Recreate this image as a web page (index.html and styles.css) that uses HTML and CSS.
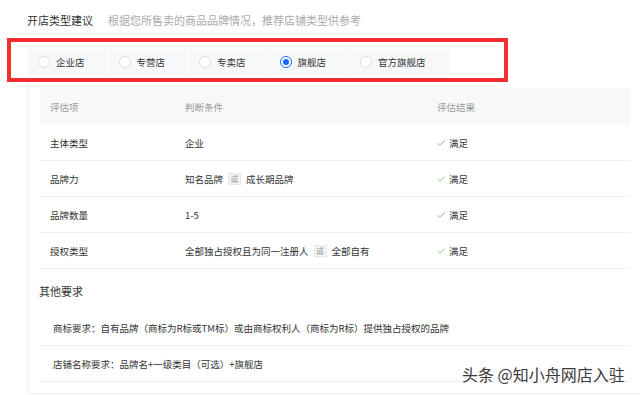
FILE: index.html
```html
<!DOCTYPE html>
<html lang="zh">
<head>
<meta charset="utf-8">
<link rel="stylesheet" href="styles.css">
</head>
<body>
<div class="page">
  <div class="head">
    <span class="title">开店类型建议</span>
    <span class="sub">根据您所售卖的商品品牌情况，推荐店铺类型供参考</span>
  </div>
  <div class="radios">
    <div class="seg"><span class="dot"></span><span>企业店</span></div>
    <div class="seg"><span class="dot"></span><span>专营店</span></div>
    <div class="seg"><span class="dot"></span><span>专卖店</span></div>
    <div class="seg on"><span class="dot"></span><span>旗舰店</span></div>
    <div class="seg"><span class="dot"></span><span>官方旗舰店</span></div>
  </div>
  <div class="card">
    <div class="table">
      <div class="row thead">
        <div class="c1">评估项</div><div class="c2">判断条件</div><div class="c3">评估结果</div>
      </div>
      <div class="row">
        <div class="c1">主体类型</div><div class="c2">企业</div>
        <div class="c3"><svg class="tick" viewBox="0 0 8 6"><path d="M0.6 3.2 L2.9 5.2 L7.4 0.7" fill="none" stroke="#6cc46c" stroke-width="0.9"/></svg>满足</div>
      </div>
      <div class="row">
        <div class="c1">品牌力</div><div class="c2">知名品牌<span class="or">或</span>成长期品牌</div>
        <div class="c3"><svg class="tick" viewBox="0 0 8 6"><path d="M0.6 3.2 L2.9 5.2 L7.4 0.7" fill="none" stroke="#6cc46c" stroke-width="0.9"/></svg>满足</div>
      </div>
      <div class="row">
        <div class="c1">品牌数量</div><div class="c2">1-5</div>
        <div class="c3"><svg class="tick" viewBox="0 0 8 6"><path d="M0.6 3.2 L2.9 5.2 L7.4 0.7" fill="none" stroke="#6cc46c" stroke-width="0.9"/></svg>满足</div>
      </div>
      <div class="row">
        <div class="c1">授权类型</div><div class="c2">全部独占授权且为同一注册人<span class="or">或</span>全部自有</div>
        <div class="c3"><svg class="tick" viewBox="0 0 8 6"><path d="M0.6 3.2 L2.9 5.2 L7.4 0.7" fill="none" stroke="#6cc46c" stroke-width="0.9"/></svg>满足</div>
      </div>
    </div>
    <div class="other">其他要求</div>
    <div class="req">商标要求：自有品牌（商标为R标或TM标）或由商标权利人（商标为R标）提供独占授权的品牌</div>
    <div class="req">店铺名称要求：品牌名+一级类目（可选）+旗舰店</div>
  </div>
  <div class="mark"></div>
  <div class="wm">头条 @知小舟网店入驻</div>
</div>
</body>
</html>
```

FILE: styles.css
```css
* { box-sizing: border-box; }
html, body { margin: 0; padding: 0; background: #fff; }
body {
  font-family: "Noto Sans CJK SC", "Noto Sans", sans-serif;
  color: #333;
  width: 640px;
  height: 395px;
  overflow: hidden;
}
.page { position: relative; height: 395px; }
.head {
  display: flex;
  align-items: center;
  height: 40px;
  padding: 0 0 0 27px;
  line-height: 16px;
  padding-bottom: 1px;
}
.title { font-size: 11px; color: #333; }
.sub { font-size: 11px; color: #aaa; margin-left: 15px; }
.radios {
  display: flex;
  gap: 1px;
  margin: 9px 0 0 28px;
  height: 26px;
}
.seg {
  display: flex;
  align-items: center;
  background: #f7f8fa;
  padding: 0 23px 0 10px;
  font-size: 9.5px;
  color: #333;
}
.dot {
  width: 12px;
  height: 12px;
  border-radius: 50%;
  border: 1px solid #dcdcdc;
  background: #fff;
  margin-right: 6px;
  position: relative;
}
.seg.on .dot { border-color: #1966ff; }
.seg.on .dot::after {
  content: "";
  position: absolute;
  left: 2px; top: 2px;
  width: 6px; height: 6px;
  border-radius: 50%;
  background: #1966ff;
}
.card {
  margin: 7px 0 0 28px;
  border-left: 1px solid #f0f0f0;
  border-bottom: 1px solid #f0f0f0;
  padding: 6px 10px 10px 11px;
  height: 312px;
}
.row {
  display: flex;
  align-items: center;
  height: 36px;
  border-bottom: 1px solid #eeeeee;
  font-size: 9.5px;
  color: #333;
}
.row.thead {
  height: 37px;
  background: #f7f8fa;
  border-bottom: none;
  color: #999;
}
.c1 { width: 135px; padding-left: 10px; }
.c2 { width: 252px; padding-left: 10px; display: flex; align-items: center; }
.c3 { flex: 1; padding-left: 10px; display: flex; align-items: center; }
.tick { width: 8px; height: 6px; margin-right: 4px; }
.or {
  display: inline-flex;
  align-items: center;
  justify-content: center;
  width: 13px;
  height: 12px;
  margin: 0 5px;
  border: 1px solid #e6e6e6;
  background: #f5f5f5;
  color: #999;
  font-size: 8px;
}
.other {
  height: 41px;
  display: flex;
  align-items: center;
  font-size: 11px;
  color: #333;
  margin-left: -1px;
  padding-top: 2px;
}
.req {
  height: 36px;
  display: flex;
  align-items: center;
  padding-left: 13px;
  font-size: 9.5px;
  color: #333;
  border-bottom: 1px solid #f0f0f0;
}
.mark {
  position: absolute;
  left: 7px;
  top: 38px;
  width: 501px;
  height: 44px;
  border: 4px solid #f2302f;
}
.wm {
  position: absolute;
  left: 462px;
  top: 364px;
  font-size: 16px;
  line-height: 20px;
  color: #3a3a3a;
  text-shadow: 0 0 2px #fff, 0 0 1px #fff;
  white-space: nowrap;
}
```
